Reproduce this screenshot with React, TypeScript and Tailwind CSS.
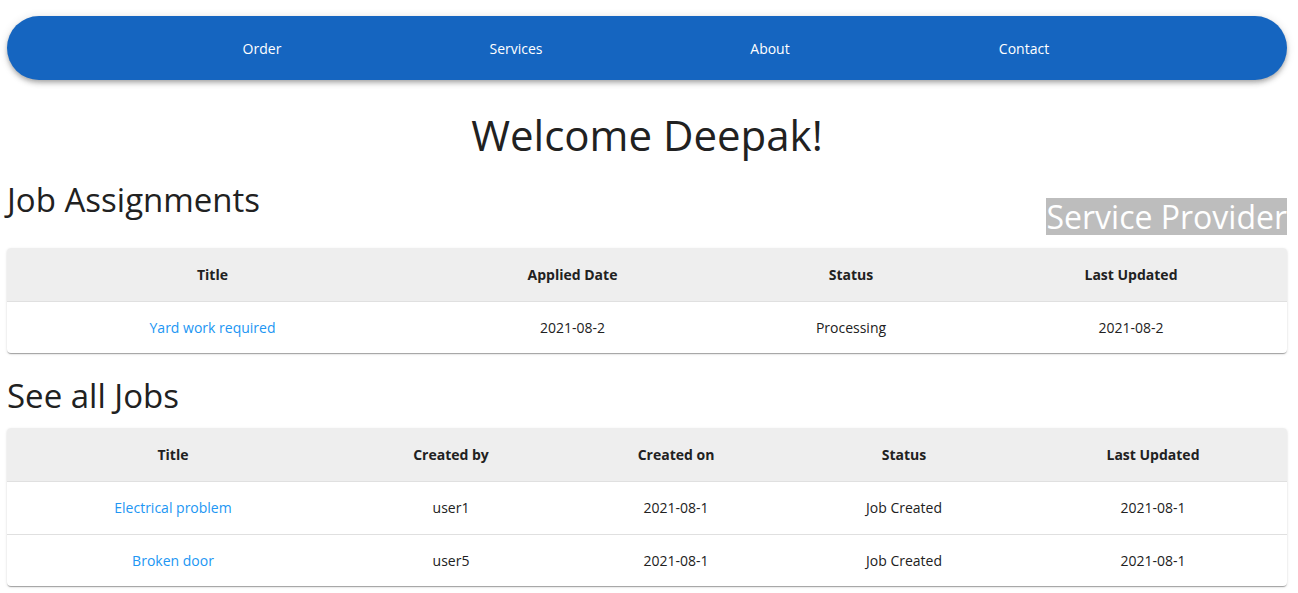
const assignments = [
  { title: 'Yard work required', applied: '2021-08-2', status: 'Processing', updated: '2021-08-2' },
];

const jobs = [
  { title: 'Electrical problem', by: 'user1', on: '2021-08-1', status: 'Job Created', updated: '2021-08-1' },
  { title: 'Broken door', by: 'user5', on: '2021-08-1', status: 'Job Created', updated: '2021-08-1' },
];

function NavBar() {
  const links = ['Order', 'Services', 'About', 'Contact'];
  return (
    <nav className="mt-4 h-16 rounded-full bg-[#1565c0] shadow-[0_2px_4px_-1px_rgba(0,0,0,0.2),0_4px_5px_0_rgba(0,0,0,0.14),0_1px_10px_0_rgba(0,0,0,0.12)] flex items-center">
      <div className="ml-[128px] w-[1016px] grid grid-cols-4">
        {links.map((l) => (
          <a key={l} className="text-center text-[14px] text-white cursor-pointer">
            {l}
          </a>
        ))}
      </div>
    </nav>
  );
}

function Table({ cols, widths, rows }: { cols: string[]; widths: string[]; rows: { text: string; link?: boolean }[][] }) {
  return (
    <div className="bg-white shadow-[0_2px_1px_-1px_rgba(0,0,0,0.2),0_1px_1px_0_rgba(0,0,0,0.14),0_1px_3px_0_rgba(0,0,0,0.12)] rounded-[4px] overflow-hidden">
      <table className="w-full table-fixed text-[14px]">
        <colgroup>
          {widths.map((w, i) => (
            <col key={i} className={w} />
          ))}
        </colgroup>
        <thead>
          <tr className="bg-[#eeeeee] h-[53px] border-b border-[#e0e0e0]">
            {cols.map((c) => (
              <th key={c} className="font-bold text-[#212121] text-center">
                {c}
              </th>
            ))}
          </tr>
        </thead>
        <tbody>
          {rows.map((r, i) => (
            <tr key={i} className="h-[53px] last:h-[52px] border-b border-[#e0e0e0] last:border-b-0">
              {r.map((c, j) => (
                <td key={j} className={`text-center ${c.link ? 'text-[#2196f3]' : 'text-[#212121]'}`}>
                  {c.text}
                </td>
              ))}
            </tr>
          ))}
        </tbody>
      </table>
    </div>
  );
}

export default function App() {
  return (
    <div className="min-h-screen bg-white pl-[7px] pr-[11px] pb-2 font-['Open_Sans',sans-serif] text-[#212121]">
      <NavBar />
      <h1 className="mt-[27px] text-center text-[42px] leading-[56px] font-normal">Welcome Deepak!</h1>
      <div className="mt-[14px] flex justify-between items-start">
        <h2 className="mt-[3px] text-[33px] leading-[40px] font-normal">Job Assignments</h2>
        <span className="mt-[21px] bg-[#bdbdbd] text-white text-[32px] leading-[37px] font-normal">Service Provider</span>
      </div>
      <div className="mt-[13px]">
        <Table
          cols={['Title', 'Applied Date', 'Status', 'Last Updated']}
          widths={['w-[411px]', 'w-[309px]', 'w-[248px]', 'w-[312px]']}
          rows={assignments.map((a) => [
            { text: a.title, link: true },
            { text: a.applied },
            { text: a.status },
            { text: a.updated },
          ])}
        />
      </div>
      <h2 className="mt-[21px] text-[33px] leading-[44px] font-normal">See all Jobs</h2>
      <div className="mt-[10px]">
        <Table
          cols={['Title', 'Created by', 'Created on', 'Status', 'Last Updated']}
          widths={['w-[332px]', 'w-[224px]', 'w-[226px]', 'w-[230px]', 'w-[268px]']}
          rows={jobs.map((j) => [
            { text: j.title, link: true },
            { text: j.by },
            { text: j.on },
            { text: j.status },
            { text: j.updated },
          ])}
        />
      </div>
    </div>
  );
}
